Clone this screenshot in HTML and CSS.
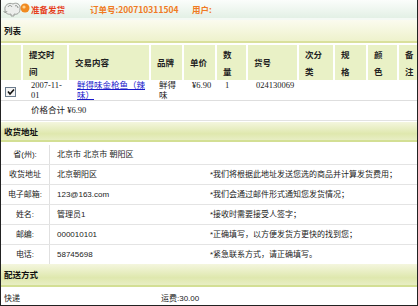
FILE: index.html
```html
<!DOCTYPE html>
<html>
<head>
<meta charset="UTF-8">
<title>准备发货</title>
<link rel="stylesheet" href="styles.css">
</head>
<body>
<div class="page">

    <div class="topbar">
        <svg class="logo" width="28" height="16" viewBox="0 0 28 16">
            <path d="M2 9 C1 4 6 1 10 3 C13 1 18 3 17 8 C17 12 14 14 11 13 L11 15 L8 15 L8 13 C5 14 2 12 2 9 Z" fill="#eceeec" stroke="#9a9e9a" stroke-width="1"/>
            <path d="M5 6 C6 4 8 4 9 6 M12 5 C13 4 15 5 15 7 M4 10 C3 12 1 12 1 10" fill="none" stroke="#8a8e8a" stroke-width="1"/>
            <circle cx="22" cy="7" r="4.5" fill="#f08a20"/>
            <circle cx="21" cy="6" r="1.6" fill="#ffd28a"/>
        </svg>
        <span class="title">准备发货</span>
        <span class="order">订单号:200710311504</span>
        <span class="user">用户:</span>
    </div>

    <div class="section-bar light">列表</div>

    <table class="goods">
        <tr class="head">
            <th class="chk-col"></th>
            <th class="w-time">提交时<br>间</th>
            <th class="w-item">交易内容</th>
            <th class="w-brand">品牌</th>
            <th class="w-price">单价</th>
            <th class="w-qty">数<br>量</th>
            <th class="w-no">货号</th>
            <th class="w-cat">次分<br>类</th>
            <th class="w-spec">规<br>格</th>
            <th class="w-color">颜<br>色</th>
            <th class="w-note">备<br>注</th>
        </tr>
        <tr class="item">
            <td class="chk-col"><span class="chk"><svg width="8" height="8" viewBox="0 0 8 8"><path d="M1 3.5 L3 6 L7 1.5" fill="none" stroke="#111" stroke-width="1.6"/></svg></span></td>
            <td><div class="ln">2007-11-</div><div class="ln">01</div></td>
            <td><div class="ln"><a href="#">鲜得味金枪鱼（辣</a></div><div class="ln"><a href="#">味）</a></div></td>
            <td><div class="ln">鲜得</div><div class="ln">味</div></td>
            <td><div class="ln">¥6.90</div></td>
            <td><div class="ln">1</div></td>
            <td><div class="ln">024130069</div></td>
            <td></td>
            <td></td>
            <td></td>
            <td></td>
        </tr>
        <tr class="sum">
            <td></td>
            <td colspan="10">价格合计 ¥6.90</td>
        </tr>
    </table>

    <div class="section-bar short">收货地址</div>

    <div class="address">
        <div class="addr-row"><div class="label">省(州):</div><div class="value">北京市 北京市 朝阳区</div><div class="note"></div></div>
        <div class="addr-row"><div class="label">收货地址</div><div class="value">北京朝阳区</div><div class="note">*我们将根据此地址发送您选的商品并计算发货费用；</div></div>
        <div class="addr-row"><div class="label">电子邮箱:</div><div class="value">123@163.com</div><div class="note">*我们会通过邮件形式通知您发货情况；</div></div>
        <div class="addr-row"><div class="label">姓名:</div><div class="value">管理员1</div><div class="note">*接收时需要接受人签字；</div></div>
        <div class="addr-row"><div class="label">邮编:</div><div class="value">000010101</div><div class="note">*正确填写，以方便发货方更快的找到您；</div></div>
        <div class="addr-row"><div class="label">电话:</div><div class="value">58745698</div><div class="note">*紧急联系方式，请正确填写。</div></div>
    </div>

    <div class="section-bar flush">配送方式</div>

    <div class="ship">
        <span class="ship-name">快递</span>
        <span class="ship-fee">运费:30.00</span>
    </div>

</div>
</body>
</html>
```

FILE: styles.css
```css
body {
    margin: 0;
    padding: 0;
    background-color: white;
    font-family: "Liberation Serif", "Noto Sans CJK SC", serif;
    font-size: 8.5px;
    color: #222;
}
.page {
    width: 416px;
    height: 305px;
    border-left: 1px solid #222;
    border-right: 1px solid #222;
    border-bottom: 1px solid #222;
    overflow: hidden;
}
.topbar {
    display: flex;
    align-items: center;
    height: 18px;
    padding-left: 2px;
    background: linear-gradient(#fbfdfb, #e3f0e5);
    border-bottom: 2px solid #f4f9f4;
    font-family: "Noto Sans CJK SC", sans-serif;
    font-weight: bold;
    font-size: 8.5px;
}
.logo {
    flex-shrink: 0;
    width: 28px;
    margin-right: 0;
}
.title {
    color: #e6401c;
    width: 59px;
    flex-shrink: 0;
}
.order {
    color: #f07a22;
    width: 102px;
    flex-shrink: 0;
}
.user {
    color: #f07a22;
}
.section-bar {
    height: 21px;
    line-height: 21px;
    padding-left: 3px;
    background: linear-gradient(#f4f6de, #dfe8ae 65%, #e8eec4);
    border-bottom: 2px solid #d3df94;
    font-family: "Noto Sans CJK SC", sans-serif;
    font-weight: bold;
    color: #111;
    margin-top: 1px;
}
.section-bar.light {
    margin-top: 0;
    background: linear-gradient(#fbfbef, #eef2cc);
    border-bottom-color: #d9e09c;
}
.section-bar.short {
    height: 18px;
    line-height: 18px;
}
.section-bar.flush {
    margin-top: 0;
}
.goods {
    width: 100%;
    border-collapse: separate;
    border-spacing: 0;
    margin-top: 2px;
}
.goods th {
    background-color: #e9f1c6;
    border-right: 2px solid white;
    text-align: left;
    font-weight: bold;
    font-family: "Noto Sans CJK SC", sans-serif;
    line-height: 17px;
    height: 35px;
    padding: 0 0 0 6px;
    vertical-align: middle;
}
.goods th:last-child {
    border-right: none;
}
.goods th.chk-col {
    padding: 0;
    width: 20px;
}
.w-time { width: 38px; }
.w-item { width: 74px; }
.w-brand { width: 25px; }
.w-price { width: 25px; }
.w-qty { width: 23px; }
.w-no { width: 43px; }
.w-cat { width: 28px; }
.w-spec { width: 25px; }
.w-color { width: 23px; }
.goods td {
    padding: 0 0 0 8px;
    height: 20px;
    vertical-align: top;
    border-bottom: 1px solid #dedede;
}
.ln {
    height: 10px;
    line-height: 10px;
    white-space: nowrap;
}
.goods td.chk-col {
    padding: 7px 0 0 4px;
    height: 13px;
}
.goods a {
    color: #1a1acc;
}
.chk {
    display: flex;
    align-items: center;
    justify-content: center;
    width: 9px;
    height: 8px;
    border: 1px solid #6b7b8c;
    background-color: #f4f4f4;
}
.goods tr.sum td {
    padding: 0;
    height: 19px;
    line-height: 19px;
    vertical-align: middle;
    border-bottom: 1px solid #e2e2e2;
}
.goods tr.sum td:last-child {
    padding-left: 8px;
}
.address {
    margin-top: 3px;
    font-family: "Liberation Sans", "Noto Sans CJK SC", sans-serif;
    font-size: 8px;
}
.addr-row {
    display: flex;
    height: 19px;
    line-height: 19px;
    border-bottom: 1px solid #e4e4e4;
}
.addr-row:last-child {
    border-bottom: none;
}
.label {
    width: 48px;
    text-align: center;
    border-right: 1px solid #e0e0e0;
}
.value {
    width: 153px;
    padding-left: 7px;
}
.note {
    flex-grow: 1;
}
.ship {
    display: flex;
    height: 18px;
    line-height: 24px;
    padding-left: 3px;
    font-family: "Liberation Sans", "Noto Sans CJK SC", sans-serif;
    font-size: 8px;
}
.ship-fee {
    margin-left: 141px;
}
```
